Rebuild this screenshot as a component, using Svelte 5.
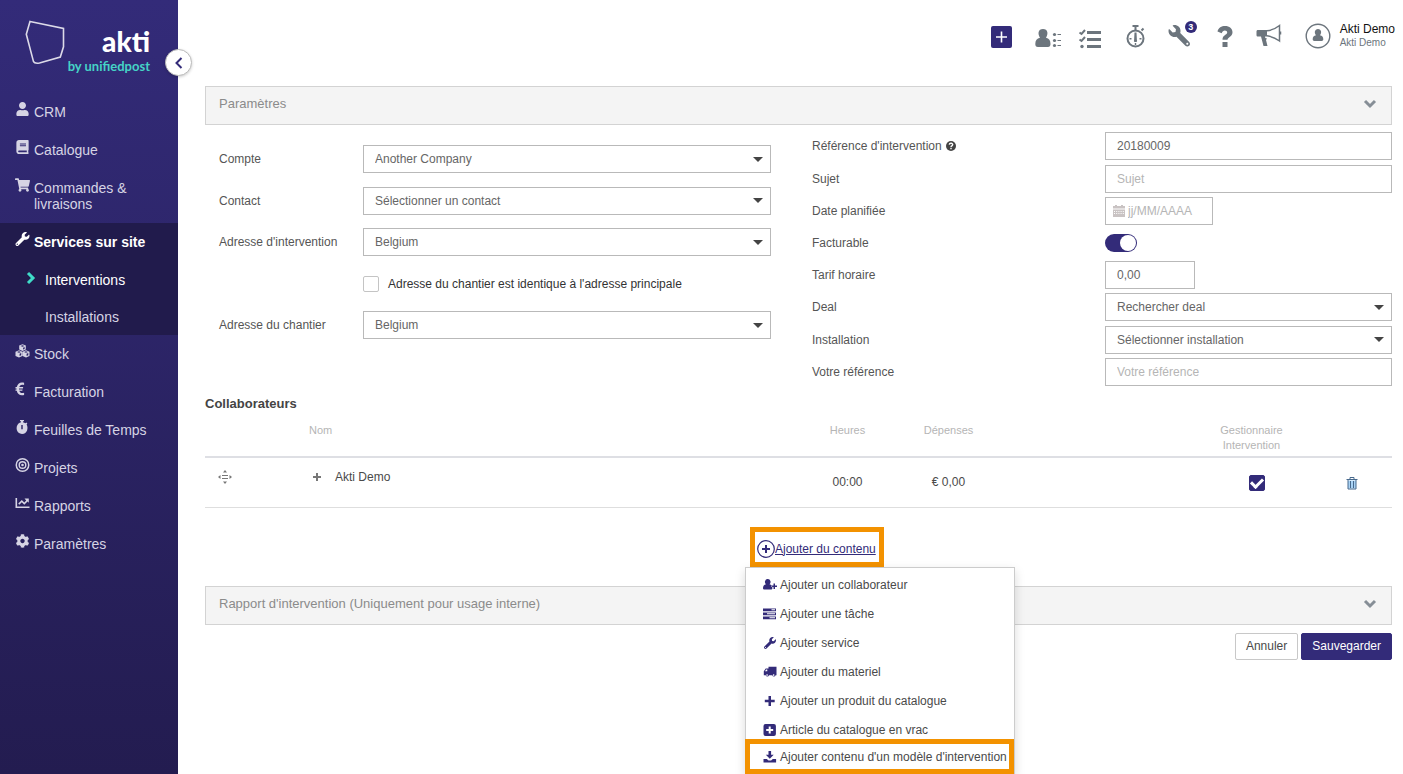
<script>
  let menuOpen = $state(true);
  let sameAddress = $state(false);
  let billable = $state(true);
  let manager = $state(true);

  const icons = {
    user: {
      box: "0 0 448 512",
      d: "M224 256c70.7 0 128-57.3 128-128S294.7 0 224 0 96 57.3 96 128s57.3 128 128 128zm89.6 32h-16.7c-22.2 10.2-46.9 16-72.9 16s-50.6-5.8-72.9-16h-16.7C60.2 288 0 348.2 0 422.4V464c0 26.5 21.5 48 48 48h352c26.5 0 48-21.5 48-48v-41.6c0-74.2-60.2-134.4-134.4-134.4z",
    },
    book: {
      box: "0 0 448 512",
      d: "M448 360V24c0-13.3-10.7-24-24-24H96C43 0 0 43 0 96v320c0 53 43 96 96 96h328c13.3 0 24-10.7 24-24v-16c0-7.5-3.5-14.3-8.9-18.7-4.2-15.4-4.2-59.3 0-74.7 5.4-4.3 8.9-11.1 8.9-18.6zM128 134c0-3.3 2.7-6 6-6h212c3.3 0 6 2.7 6 6v20c0 3.3-2.7 6-6 6H134c-3.3 0-6-2.7-6-6v-20zm0 64c0-3.3 2.7-6 6-6h212c3.3 0 6 2.7 6 6v20c0 3.3-2.7 6-6 6H134c-3.3 0-6-2.7-6-6v-20zm253.4 250H96c-17.7 0-32-14.3-32-32 0-17.6 14.4-32 32-32h285.4c-1.9 17.1-1.9 46.9 0 64z",
    },
    cart: {
      box: "0 0 576 512",
      d: "M528.12 301.319l47.273-208C578.806 78.301 567.391 64 551.99 64H159.208l-9.166-44.81C147.758 8.021 137.93 0 126.529 0H24C10.745 0 0 10.745 0 24v16c0 13.255 10.745 24 24 24h69.883l70.248 343.435C147.325 417.1 136 435.222 136 456c0 30.928 25.072 56 56 56s56-25.072 56-56c0-15.674-6.447-29.835-16.824-40h209.647C430.447 426.165 424 440.326 424 456c0 30.928 25.072 56 56 56s56-25.072 56-56c0-22.172-12.888-41.332-31.579-50.405l5.517-24.276c3.413-15.018-8.002-29.319-23.403-29.319H218.117l-6.545-32h293.145c11.206 0 20.92-7.754 23.403-18.681z",
    },
    wrench: {
      box: "0 0 512 512",
      d: "M507.73 109.1c-2.24-9.03-13.54-12.09-20.12-5.51l-74.36 74.36-67.88-11.31-11.31-67.88 74.36-74.36c6.62-6.62 3.43-17.9-5.66-20.16-47.38-11.74-99.55.91-136.58 37.93-39.64 39.64-50.55 97.1-34.05 147.2L18.74 402.76c-24.99 24.99-24.99 65.51 0 90.5 24.99 24.99 65.51 24.99 90.5 0l213.21-213.21c50.12 16.71 107.47 5.68 147.37-34.22 37.07-37.07 49.7-89.32 37.91-136.73zM64 472c-13.25 0-24-10.75-24-24 0-13.26 10.75-24 24-24s24 10.74 24 24c0 13.25-10.75 24-24 24z",
    },
    cubes: {
      box: "0 0 14 14",
      d: "M7 .2l3.300 1.300v4L7 6.900 3.700 5.500v-4zM7 1.200L5 2l2 .8L9 2zM3.500 6.300L6.900 7.700v4.200l-3.400 1.600L0 11.900V7.700zM3.500 7.200l-2 .8 2 .8 2-.8zM10.500 6.300L14 7.700v4.200l-3.500 1.600-3.400-1.600V7.700zM10.500 7.200l-2 .8 2 .8 2-.8zM7.600 3.700v1.900l1.500-.7V3zM4.100 9.700V12l1.600-.8V9zM11.100 9.700V12l1.700-.8V9z",
    },
    euro: {
      box: "0 0 14 14",
      d: "M8.600.8v2.300C5.900 2 4.300 3 3.800 5h3.900l-.3 1.400H3.500v1h3.600l-.3 1.400h-3c.6 2 2.400 2.900 4.800 1.900v2.300C4.800 14.200 2 12.400 1.300 8.800H0V7.400h1.100v-1H0V5h1.300C2 1.500 5 -.5 8.600.8z",
    },
    stopwatch: {
      box: "0 0 14 14",
      d: "M4.500 0h4v1.300H7.500v1c1 .2 1.800.5 2.500 1l.8-.8 1.100 1.100-.8.900C13 7.500 12 14 6.500 14S-.5 7 3 3.600c.7-.7 1.600-1.100 2.500-1.300v-1h-1zM5.800 5v4.300h1.400V5z",
    },
    target: {
      box: "0 0 14 14",
      d: "M7 0a7 7 0 1 1 0 14A7 7 0 0 1 7 0zm0 1.500a5.500 5.500 0 1 0 0 11 5.500 5.500 0 0 0 0-11zM7 3a4 4 0 1 1 0 8 4 4 0 0 1 0-8zm0 1.400a2.600 2.600 0 1 0 0 5.200 2.600 2.600 0 0 0 0-5.200zM7 5.700a1.300 1.300 0 1 1 0 2.600 1.300 1.300 0 0 1 0-2.600z",
    },
    chart: {
      box: "0 0 14 14",
      d: "M0 2h1.600v8.400H14V12H0zM9 2.500h4.300v4.300L12 5.500 8.800 8.700 6.300 6.200 3.800 8.700 2.700 7.600l3.600-3.700 2.500 2.500 1.900-2z",
    },
    cog: {
      box: "0 0 512 512",
      d: "M487.4 315.7l-42.6-24.6c4.3-23.2 4.3-47 0-70.2l42.6-24.6c4.9-2.8 7.1-8.6 5.5-14-11.1-35.6-30-67.8-54.7-94.6-3.8-4.1-10-5.1-14.8-2.3L380.8 110c-17.9-15.4-38.5-27.3-60.8-35.1V25.800c0-5.600-3.900-10.500-9.400-11.700-36.700-8.200-74.300-7.800-109.200 0-5.500 1.200-9.400 6.100-9.400 11.700V75c-22.200 7.900-42.800 19.800-60.800 35.100L88.700 85.500c-4.900-2.800-11-1.900-14.800 2.300-24.700 26.700-43.600 58.900-54.700 94.600-1.700 5.400.6 11.200 5.500 14L67.300 221c-4.300 23.200-4.300 47 0 70.200l-42.600 24.600c-4.900 2.800-7.100 8.600-5.500 14 11.100 35.600 30 67.800 54.700 94.600 3.800 4.100 10 5.100 14.800 2.300l42.600-24.600c17.900 15.400 38.500 27.300 60.800 35.100v49.200c0 5.600 3.900 10.500 9.400 11.700 36.700 8.200 74.300 7.800 109.200 0 5.500-1.200 9.400-6.100 9.400-11.700v-49.200c22.200-7.900 42.800-19.800 60.800-35.100l42.600 24.600c4.900 2.800 11 1.900 14.800-2.300 24.700-26.700 43.600-58.900 54.700-94.600 1.500-5.500-.7-11.300-5.600-14.100zM256 336c-44.100 0-80-35.900-80-80s35.900-80 80-80 80 35.900 80 80-35.900 80-80 80z",
    },
    userPlus: {
      box: "0 0 14 12",
      d: "M4.800 0a2.700 2.900 0 0 1 1.700 5.200C8.500 5.700 9.400 7 9.400 9c0 1-.6 1.500-1.500 1.500H1.500C.6 10.500 0 10 0 9c0-2 1-3.300 3-3.800A2.700 2.900 0 0 1 4.800 0zM10.500 4.500H12V6.400h2v1.500h-2v2h-1.500v-2h-2V6.400h2z",
    },
    tasks: {
      box: "0 0 14 12",
      d: "M0 .5h13v2.700H0zM0 4.500h13v2.700H0zM0 8.500h13v2.700H0zM8.500 1.300v1H12v-1zM4 5.300v1h8v-1zM6.500 9.300v1H12v-1z",
    },
    truck: {
      box: "0 0 14 12",
      d: "M5.500.8h8v8.400h-.9a1.700 1.700 0 0 1-3.300 0H6a1.700 1.700 0 0 1-3.300 0H.8V5.300L2.700 2.600h2.800zM2 5.200h2.300V3.600H3.100zM4.300 8.300a.8.800 0 1 0 .1 1.500.8.800 0 0 0-.1-1.500zM10.900 8.300a.8.800 0 1 0 .1 1.500.8.800 0 0 0-.1-1.500z",
    },
    plus: { box: "0 0 14 12", d: "M5.500 1h2.500v3.700h3.700v2.500H8v3.700H5.500V7.200H1.800V4.700h3.700z" },
    plusSquare: {
      box: "0 0 14 12",
      d: "M2.500 0h8.400a2 2 0 0 1 2 2v8a2 2 0 0 1-2 2H2.500a2 2 0 0 1-2-2V2a2 2 0 0 1 2-2zM5.700 2.500V5H3.200v2h2.500v2.500h2V7h2.500V5H7.700V2.500z",
    },
    download: {
      box: "0 0 14 12",
      d: "M5.500 0h2.600v3.800h2.600L6.800 7.800l-4-4h2.700zM.5 8h3.300l1.700 1.600h2.600L9.800 8h3.300v3.400H.5z",
    },
  };

  const before = [
    { label: "CRM", icon: "user" },
    { label: "Catalogue", icon: "book" },
    { label: "Commandes & livraisons", icon: "cart" },
  ];

  const after = [
    { label: "Stock", icon: "cubes" },
    { label: "Facturation", icon: "euro" },
    { label: "Feuilles de Temps", icon: "stopwatch" },
    { label: "Projets", icon: "target" },
    { label: "Rapports", icon: "chart" },
    { label: "Paramètres", icon: "cog" },
  ];

  const actions = [
    { label: "Ajouter un collaborateur", icon: "userPlus" },
    { label: "Ajouter une tâche", icon: "tasks" },
    { label: "Ajouter service", icon: "wrench" },
    { label: "Ajouter du materiel", icon: "truck" },
    { label: "Ajouter un produit du catalogue", icon: "plus" },
    { label: "Article du catalogue en vrac", icon: "plusSquare" },
    { label: "Ajouter contenu d'un modèle d'intervention", icon: "download", marked: true },
  ];
</script>

{#snippet icon(name)}
  <svg class="icon" viewBox={icons[name].box} aria-hidden="true">
    <path fill-rule="evenodd" d={icons[name].d} />
  </svg>
{/snippet}

{#snippet navItem(item)}
  <li>
    <a href="#{item.icon}">{@render icon(item.icon)}<span>{item.label}</span></a>
  </li>
{/snippet}

{#snippet select(id, value)}
  <div class="select">
    <select {id}><option>{value}</option></select>
    <svg viewBox="0 0 10 5" aria-hidden="true"><path d="M0 0h10L5 5z" /></svg>
  </div>
{/snippet}

{#snippet panel(title)}
  <button class="panel">
    <span>{title}</span>
    <svg viewBox="0 0 14 10" aria-hidden="true"><path d="M2 2l5 5 5-5" /></svg>
  </button>
{/snippet}

<div class="app">
  <aside>
    <div class="brand">
      <svg viewBox="0 0 42 46" aria-hidden="true">
        <path d="M6 2.500L39.500 9.500v18.300L36.300 38 15.500 44q-5 .8-6-1.400L2.300 15.300z" />
      </svg>
      <div class="wordmark">
        <strong>akti</strong>
        <span>by unifiedpost</span>
      </div>
      <button class="collapse" aria-label="Réduire le menu">
        <svg viewBox="0 0 10 14" aria-hidden="true"><path d="M7.500 2l-5 5 5 5" /></svg>
      </button>
    </div>

    <nav>
      <ul>
        {#each before as item}
          {@render navItem(item)}
        {/each}
        <li class="open">
          <a class="current" href="#services">{@render icon("wrench")}<span>Services sur site</span></a>
          <ul>
            <li>
              <a class="current" href="#interventions">
                <svg class="chevron" viewBox="0 0 10 14" aria-hidden="true"><path d="M2 2l5 5-5 5" /></svg>
                <span>Interventions</span>
              </a>
            </li>
            <li><a href="#installations"><span>Installations</span></a></li>
          </ul>
        </li>
        {#each after as item}
          {@render navItem(item)}
        {/each}
      </ul>
    </nav>
  </aside>

  <main>
    <header>
      <button aria-label="Ajouter">
        <svg viewBox="0 0 28 28">
          <rect class="brand-fill" x="6" y="4" width="21" height="22" rx="2" />
          <path class="thin" d="M16.500 9.500v11M11 15h11" />
        </svg>
      </button>
      <button aria-label="Contacts">
        <svg viewBox="0 0 28 28">
          <path d="M13 7c5 0 5.500 5 3 8.800 3 .8 4.500 2.700 4.500 6.200 0 2-1 3-2.500 3H8c-2 0-2.700-1-2.700-3 0-3.500 1.700-5.400 4.700-6.200C7.500 12 8 7 13 7zM27.500 12h3.500v1h-3.500zM27.500 18h3.500v1h-3.500zM27.500 23h3.500v1h-3.500z" />
          <circle cx="24.500" cy="12.500" r="1.600" />
          <circle cx="24.500" cy="18.500" r="1.600" />
          <circle cx="24.500" cy="23.500" r="1.600" />
        </svg>
      </button>
      <button aria-label="Tâches">
        <svg viewBox="0 0 28 28">
          <path d="M12 9h14v3H12zM12 16h14v3H12zM12 23h14v3H12z" />
          <path class="line" d="M4.500 10.500l2 1.500 3.500-4M4.500 17.500l2 1.500 3.500-4" />
          <circle cx="7" cy="24.500" r="1.700" />
        </svg>
      </button>
      <button aria-label="Chronomètre">
        <svg viewBox="0 0 28 28">
          <circle class="line" cx="15.500" cy="16.500" r="8" />
          <path class="line" d="M12.500 4h6M15.500 4v4M21.500 8.500l2-2" />
          <path d="M14.500 10.500h2l.4 7.500a1.500 1.500 0 1 1-2.800 0zM9.500 16h2v1.500h-2zM19.500 16h2v1.500h-2zM14.800 21h1.400v2h-1.400z" />
        </svg>
      </button>
      <button class="tools" aria-label="Outils">
        <svg viewBox="0 0 28 28">
          <path transform="translate(25 3) scale(-.042 .042)" d={icons.wrench.d} />
        </svg>
        <span>3</span>
      </button>
      <button aria-label="Aide">
        <svg viewBox="0 0 28 28">
          <path d="M7.500 9.500C8.500 5.500 11.500 4 15 4c4.500 0 7.500 2.500 7.500 6.300 0 4.700-5 5-5 7.500h-5c0-5 4.700-5 4.700-7.300 0-1.200-1-2-2.300-2-1.500 0-2.500.9-3.200 2.700zM12.500 20h5v5h-5z" />
        </svg>
      </button>
      <button aria-label="Annonces">
        <svg viewBox="0 0 28 28">
          <path d="M3 8h9v6.500h-2l.3 1.500 1.700.5-1 1.500 1.500 6H8.500L6 14.500H3c-1 0-1.500-.5-1.500-1.500V9.500C1.500 8.500 2 8 3 8z" />
          <path class="fine" d="M12 8.800c5-.5 9-2.500 12.500-5.300v15.500C21 16.500 17 14.500 12 13.800M25.500 9.500v3" />
        </svg>
      </button>
      <div class="account">
        <svg viewBox="0 0 26 26" aria-hidden="true">
          <circle cx="13" cy="13" r="11.800" />
          <path d="M13 6c3.400 0 4 4 2 6.300 2.200.6 3.300 1.700 3.300 4 0 1-.6 1.700-1.600 1.700H9.300c-1 0-1.600-.7-1.600-1.700 0-2.300 1.100-3.400 3.300-4C9 10 9.600 6 13 6z" />
        </svg>
        <p><b>Akti Demo</b><small>Akti Demo</small></p>
      </div>
    </header>

    {@render panel("Paramètres")}

    <form>
      <div class="left">
        <label for="account">Compte</label>
        {@render select("account", "Another Company")}
        <label for="contact">Contact</label>
        {@render select("contact", "Sélectionner un contact")}
        <label for="address">Adresse d'intervention</label>
        {@render select("address", "Belgium")}
        <label class="same">
          <input class="check" type="checkbox" bind:checked={sameAddress} />
          Adresse du chantier est identique à l'adresse principale
        </label>
        <label for="site">Adresse du chantier</label>
        {@render select("site", "Belgium")}
      </div>

      <div class="right">
        <label for="reference">
          Référence d'intervention
          <svg class="help" viewBox="0 0 12 12" aria-hidden="true">
            <circle cx="6" cy="6" r="5" />
            <path d="M4.200 4.700c.3-2 3.700-1.800 3.500.1C7.600 6 6 5.800 6 7.200M6 8v1.200" />
          </svg>
        </label>
        <input id="reference" type="text" value="20180009" />
        <label for="subject">Sujet</label>
        <input id="subject" type="text" placeholder="Sujet" />
        <label for="date">Date planifiée</label>
        <div class="date">
          <svg viewBox="0 0 12 12" aria-hidden="true">
            <path fill-rule="evenodd" d="M0 1h2V0h2v1h4V0h2v1h2v2.500H0zM0 4.500h12V12H0zM1 6v1h1V6zm2.200 0v1h1V6zm2.200 0v1h1V6zm2.200 0v1h1V6zm2.200 0v1h1V6zM1 8v1h1V8zm2.200 0v1h1V8zm2.200 0v1h1V8zm2.200 0v1h1V8zm2.200 0v1h1V8z" />
          </svg>
          <input id="date" type="text" placeholder="jj/MM/AAAA" />
        </div>
        <label for="billable">Facturable</label>
        <input id="billable" class="toggle" type="checkbox" role="switch" bind:checked={billable} />
        <label for="rate">Tarif horaire</label>
        <input id="rate" class="short" type="text" value="0,00" />
        <label for="deal">Deal</label>
        {@render select("deal", "Rechercher deal")}
        <label for="installation">Installation</label>
        {@render select("installation", "Sélectionner installation")}
        <label for="your-reference">Votre référence</label>
        <input id="your-reference" type="text" placeholder="Votre référence" />
      </div>
    </form>

    <h2>Collaborateurs</h2>
    <table>
      <colgroup>
        <col class="drag-col" /><col /><col class="amount-col" /><col class="amount-col" />
        <col class="space-col" /><col class="manager-col" /><col class="delete-col" />
      </colgroup>
      <thead>
        <tr>
          <th></th>
          <th class="name">Nom</th>
          <th>Heures</th>
          <th>Dépenses</th>
          <th></th>
          <th>Gestionnaire Intervention</th>
          <th></th>
        </tr>
      </thead>
      <tbody>
        <tr>
          <td class="drag">
            <svg viewBox="0 0 14 14" aria-hidden="true">
              <path d="M7 0l2 2.500H5zM7 14l2-2.500H5zM0 7l2.500-2v4zM14 7l-2.500-2v4zM4 5h6v1H4zM4 8h6v1H4z" />
            </svg>
          </td>
          <td>
            <div class="person">
              <svg viewBox="0 0 8 8" aria-hidden="true"><path d="M3 0h2v3h3v2H5v3H3V5H0V3h3z" /></svg>
              Akti Demo
            </div>
          </td>
          <td>00:00</td>
          <td>€ 0,00</td>
          <td></td>
          <td class="manager">
            <input class="check" type="checkbox" aria-label="Gestionnaire" bind:checked={manager} />
          </td>
          <td>
            <button class="delete" aria-label="Supprimer">
              <svg viewBox="0 0 12 14" aria-hidden="true">
                <path class="bin" d="M2 4.500h8v8H2z" />
                <path d="M.500 3.500h11M4 3v-1.500h4v1.500M2 4v9h8V4M4.500 5v7M7.500 5v7" />
              </svg>
            </button>
          </td>
        </tr>
      </tbody>
    </table>

    <div class="add">
      <div class="add-box">
        <button class="add-link" onclick={() => (menuOpen = !menuOpen)}>
          <svg viewBox="0 0 18 18" aria-hidden="true">
            <circle cx="9" cy="9" r="8.300" />
            <path d="M9 5v8M5 9h8" />
          </svg>
          <span>Ajouter du contenu</span>
        </button>
        {#if menuOpen}
          <ul class="menu">
            {#each actions as action}
              <li class:marked={action.marked}>
                <button>{@render icon(action.icon)}{action.label}</button>
              </li>
            {/each}
          </ul>
        {/if}
      </div>
    </div>

    {@render panel("Rapport d'intervention (Uniquement pour usage interne)")}

    <footer>
      <button>Annuler</button>
      <button class="primary">Sauvegarder</button>
    </footer>
  </main>
</div>

<style>
  :global(body) {
    margin: 0;
    background: #fff;
  }

  .app {
    display: flex;
    min-height: 100vh;
    font: 12px/16px "Liberation Sans", Arial, sans-serif;
    color: #4a4a4a;
  }

  .app * {
    box-sizing: border-box;
  }

  ul {
    margin: 0;
    padding: 0;
    list-style: none;
  }

  button {
    padding: 0;
    border: none;
    background: none;
    font: inherit;
    color: inherit;
    cursor: pointer;
  }

  .icon {
    flex: none;
    fill: currentColor;
  }

  /* Sidebar */
  aside {
    flex: none;
    width: 178px;
    background: linear-gradient(#332b79, #231c50);
  }

  .brand {
    position: relative;
    display: flex;
    height: 93px;
    padding: 19px 28px 0 24px;
  }

  .brand > svg {
    flex: none;
    width: 42px;
    height: 46px;
    fill: none;
    stroke: #dcdae8;
    stroke-width: 1.6;
  }

  .wordmark {
    display: flex;
    flex: 1;
    flex-direction: column;
    align-items: flex-end;
    min-width: 0;
    padding-top: 6px;
    white-space: nowrap;
  }

  .wordmark strong {
    font: 900 28px/33px Lato, sans-serif;
    color: #fff;
  }

  .wordmark span {
    font: 700 13px/16px Lato, sans-serif;
    color: #45d3c6;
  }

  .collapse {
    position: absolute;
    top: 49px;
    right: -14px;
    display: grid;
    place-items: center;
    width: 27px;
    height: 27px;
    border: 1px solid #bbb;
    border-radius: 50%;
    background: #fff;
    box-shadow: 0 1px 3px rgb(0 0 0 / 0.2);
  }

  .collapse svg {
    width: 10px;
    height: 14px;
    fill: none;
    stroke: #332b79;
    stroke-width: 2;
  }

  nav a {
    display: flex;
    align-items: flex-start;
    gap: 4px;
    padding: 11px 24px 11px 15px;
    font-size: 14px;
    color: #d6d4e4;
    text-decoration: none;
  }

  nav .icon {
    width: 15px;
    height: 14px;
    margin-top: -2px;
  }

  .open {
    background: #211b4c;
  }

  nav .current {
    color: #fff;
  }

  .open > .current {
    padding-right: 0;
    font-weight: 700;
  }

  .open ul a {
    position: relative;
    padding: 11px 0 10px 45px;
  }

  .chevron {
    position: absolute;
    top: 10px;
    left: 26px;
    width: 10px;
    height: 14px;
    fill: none;
    stroke: #3fdcc8;
    stroke-width: 3;
  }

  /* Top bar */
  main {
    flex: 1;
    min-width: 0;
    padding: 0 11px 0 27px;
  }

  header {
    display: flex;
    align-items: center;
    justify-content: flex-end;
    height: 86px;
    margin-right: -3px;
    padding-bottom: 14px;
    color: #6c757d;
  }

  header button {
    position: relative;
    width: 45px;
    height: 28px;
  }

  header svg {
    width: 28px;
    height: 28px;
    overflow: visible;
    fill: currentColor;
  }

  header .line,
  header .fine {
    fill: none;
    stroke: currentColor;
    stroke-width: 2;
  }

  header .fine {
    stroke-width: 1.5;
  }

  .brand-fill {
    fill: #332b79;
  }

  .thin {
    stroke: #fff;
    stroke-width: 1.6;
  }

  .tools span {
    position: absolute;
    top: -1px;
    right: 5px;
    width: 12px;
    height: 12px;
    border-radius: 50%;
    background: #332b79;
    font-size: 9px;
    font-weight: 700;
    line-height: 12px;
    color: #fff;
  }

  .account {
    display: flex;
    align-items: center;
    gap: 9px;
    margin-left: 13px;
  }

  .account svg {
    width: 26px;
    height: 26px;
  }

  .account circle {
    fill: none;
    stroke: currentColor;
    stroke-width: 1.4;
  }

  .account p {
    margin: 0;
  }

  .account b,
  .account small {
    display: block;
    font-weight: 400;
    line-height: 14px;
  }

  .account b {
    color: #111;
  }

  .account small {
    font-size: 10px;
  }

  /* Collapsible section bars */
  .panel {
    display: flex;
    align-items: center;
    justify-content: space-between;
    width: 100%;
    height: 39px;
    padding: 0 14px 3px 13px;
    border: 1px solid #d3d3d3;
    background: #f4f4f4;
    font-size: 13px;
    color: #8b8b8b;
  }

  .panel svg {
    width: 14px;
    height: 10px;
    fill: none;
    stroke: #868e96;
    stroke-width: 3;
  }

  /* Form */
  form {
    display: grid;
    grid-template-columns: 552fr 580fr;
    gap: 41px;
    padding: 7px 0 0 14px;
  }

  .left,
  .right {
    display: grid;
    align-content: start;
    align-items: center;
  }

  .left {
    grid-template-columns: 144px 1fr;
    grid-template-rows: 28px 27px 28px 27px 28px;
    row-gap: 14px;
    padding-top: 13px;
  }

  .right {
    grid-template-columns: 293fr 287fr;
    grid-template-rows: 28px 29px 28px 28px 28px 28px 29px 28px;
    row-gap: 4px;
  }

  label {
    color: #555;
  }

  input[type="text"],
  select {
    width: 100%;
    height: 28px;
    padding: 0 11px;
    border: 1px solid #b9b9b9;
    border-radius: 0;
    background: #fff;
    font: inherit;
    color: #666;
    appearance: none;
  }

  input::placeholder {
    color: #b5b5b5;
    opacity: 1;
  }

  .select {
    display: grid;
    align-items: center;
  }

  .select > * {
    grid-area: 1 / 1;
  }

  .select svg {
    justify-self: end;
    width: 10px;
    height: 5px;
    margin-right: 8px;
    fill: #444;
    pointer-events: none;
  }

  .same {
    display: flex;
    grid-column: 2;
    align-items: center;
    gap: 9px;
    color: #333;
  }

  .check {
    flex: none;
    width: 16px;
    height: 16px;
    margin: 0;
    border: 1px solid #c4c4c4;
    border-radius: 2px;
    background: #fff;
    appearance: none;
  }

  .check:checked {
    border-color: #332b79;
    background: #332b79;
  }

  .check:checked::before {
    content: "";
    display: block;
    width: 9px;
    height: 5px;
    margin: 2px auto 0;
    border: solid #fff;
    border-width: 0 0 3px 3px;
    transform: rotate(-45deg);
  }

  .help {
    width: 12px;
    height: 12px;
    vertical-align: -2px;
    fill: #444;
  }

  .help path {
    fill: none;
    stroke: #fff;
    stroke-width: 1.4;
  }

  .date {
    display: flex;
    align-items: center;
    gap: 3px;
    width: 108px;
    height: 28px;
    padding-left: 7px;
    border: 1px solid #b9b9b9;
  }

  .date svg {
    flex: none;
    width: 12px;
    height: 12px;
    fill: #c9c3c3;
  }

  .date input[type="text"] {
    height: 26px;
    padding: 0;
    border: none;
  }

  .toggle {
    width: 32px;
    height: 18px;
    margin: 0;
    padding: 1px;
    border-radius: 9px;
    background: #bbb;
    appearance: none;
  }

  .toggle::before {
    content: "";
    display: block;
    width: 16px;
    height: 16px;
    border-radius: 50%;
    background: #fff;
  }

  .toggle:checked {
    background: #332b79;
  }

  .toggle:checked::before {
    margin-left: auto;
  }

  input.short[type="text"] {
    width: 90px;
  }

  /* Collaborators */
  h2 {
    margin: 10px 0 11px;
    font-size: 13px;
    line-height: 16px;
    color: #444;
  }

  table {
    width: 100%;
    border-collapse: collapse;
    table-layout: fixed;
  }

  .drag-col {
    width: 104px;
  }

  .amount-col {
    width: 101px;
  }

  .space-col {
    width: 192px;
  }

  .manager-col {
    width: 121px;
  }

  .delete-col {
    width: 80px;
  }

  th {
    height: 34px;
    padding: 0 24px;
    border-bottom: 2px solid #dedfe4;
    font-size: 11px;
    font-weight: 400;
    line-height: 15px;
    color: #b5b5b5;
    vertical-align: top;
  }

  th:nth-child(3),
  th:nth-child(4) {
    padding: 0;
  }

  th.name {
    padding: 0;
    text-align: left;
  }

  td {
    height: 50px;
    padding: 0;
    border-bottom: 1px solid #dedede;
    text-align: center;
  }

  td svg {
    display: block;
    fill: #777;
  }

  .drag {
    padding: 0 0 10px 13px;
  }

  .drag svg {
    width: 14px;
    height: 14px;
  }

  .person {
    display: flex;
    align-items: center;
    gap: 14px;
    padding: 0 0 10px 4px;
  }

  .person svg {
    width: 8px;
    height: 8px;
  }

  .manager {
    padding-left: 10px;
  }

  .manager .check,
  .delete {
    vertical-align: middle;
  }

  .delete svg {
    width: 12px;
    height: 14px;
    fill: none;
    stroke: #47698c;
  }

  .delete .bin {
    fill: #a9d3f5;
    stroke: none;
  }

  /* Add content */
  .add {
    display: flex;
    justify-content: center;
    margin: 19px 0;
    padding-left: 37px;
  }

  .add-box {
    position: relative;
    width: 134px;
    height: 40px;
    padding: 8px 0 0 2px;
    border: 5px solid #f39200;
  }

  .add-link {
    display: flex;
    align-items: center;
    white-space: nowrap;
    color: #332b79;
  }

  .add-link span {
    text-decoration: underline;
  }

  .add-link svg {
    flex: none;
    width: 18px;
    height: 18px;
    fill: none;
    stroke: #332b79;
    stroke-width: 1.2;
  }

  .add-link path {
    stroke-width: 2;
  }

  .menu {
    position: absolute;
    top: 35px;
    left: -10px;
    width: 270px;
    padding: 2px 0 5px;
    border: 1px solid #ccc;
    border-bottom: none;
    background: #fff;
    box-shadow: 0 4px 10px rgb(0 0 0 / 0.15);
  }

  .menu button {
    display: flex;
    align-items: center;
    gap: 3px;
    width: 100%;
    height: 29px;
    padding: 2px 0 0 17px;
    white-space: nowrap;
  }

  .menu .icon {
    width: 14px;
    height: 12px;
    fill: #332b79;
  }

  .marked {
    position: relative;
  }

  .menu .marked button {
    height: 25px;
  }

  .marked::after {
    content: "";
    position: absolute;
    inset: -5px 0 -5px -1px;
    border: 5px solid #f39200;
    pointer-events: none;
  }

  footer {
    display: flex;
    justify-content: flex-end;
    gap: 3px;
    padding-top: 8px;
  }

  footer button {
    height: 27px;
    padding: 0 10px;
    border: 1px solid #c8c8c8;
    border-radius: 2px;
  }

  footer .primary {
    border-color: #332b79;
    background: #332b79;
    color: #fff;
  }
</style>
